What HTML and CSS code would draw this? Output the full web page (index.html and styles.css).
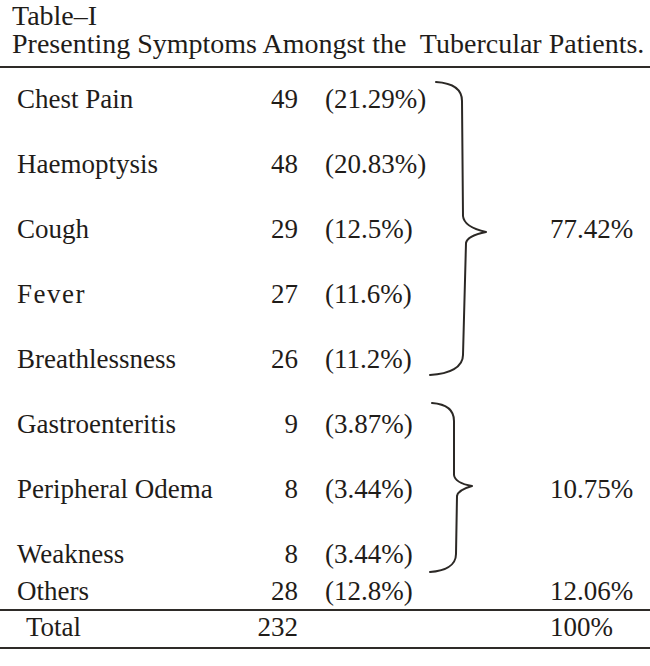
FILE: index.html
```html
<!DOCTYPE html>
<html lang="en">
<head>
<meta charset="utf-8">
<title>Table–I</title>
<link rel="stylesheet" href="styles.css">
</head>
<body>
<div class="page">
  <div class="caption">
    <div>Table–I</div>
    <div>Presenting Symptoms Amongst the&nbsp; Tubercular Patients.</div>
  </div>
  <div class="rule"></div>
  <div class="tbody">
    <div class="group g5">
      <div class="name r1">Chest Pain</div><div class="count r1">49</div><div class="pct r1">(21.29%)</div>
      <div class="name r2">Haemoptysis</div><div class="count r2">48</div><div class="pct r2">(20.83%)</div>
      <div class="name r3">Cough</div><div class="count r3">29</div><div class="pct r3">(12.5%)</div>
      <div class="name r4 spaced">Fever</div><div class="count r4">27</div><div class="pct r4">(11.6%)</div>
      <div class="name r5">Breathlessness</div><div class="count r5">26</div><div class="pct r5">(11.2%)</div>
      <div class="brace">
        <svg class="brace-svg" width="60" height="292" viewBox="0 0 60 292">
          <path d="M 6 -1 C 22 0, 32 5, 32 18 L 33 133 Q 34 144 56 149 Q 37 153 36 160 L 33 272 C 33 284, 20 291, 0 292"/>
        </svg>
      </div>
      <div class="value">77.42%</div>
    </div>
    <div class="group g3">
      <div class="name r1">Gastroenteritis</div><div class="count r1">9</div><div class="pct r1">(3.87%)</div>
      <div class="name r2">Peripheral Odema</div><div class="count r2">8</div><div class="pct r2">(3.44%)</div>
      <div class="name r3">Weakness</div><div class="count r3">8</div><div class="pct r3">(3.44%)</div>
      <div class="brace">
        <svg class="brace-svg" width="60" height="162" viewBox="0 0 60 162">
          <path d="M 2 -5 C 16 -4, 24 1, 24 13 L 24 67 Q 25 75 42 78 Q 28 82 27 88 L 26 146 C 26 158, 14 163, 0 164"/>
        </svg>
      </div>
      <div class="value">10.75%</div>
    </div>
    <div class="group g1 others">
      <div class="name">Others</div><div class="count">28</div><div class="pct">(12.8%)</div><div></div><div class="value">12.06%</div>
    </div>
  </div>
  <div class="rule rule-mid"></div>
  <div class="group g1 total">
    <div class="name">Total</div><div class="count">232</div><div class="pct"></div><div></div><div class="value">100%</div>
  </div>
  <div class="rule rule-end"></div>
</div>
</body>
</html>
```
FILE: styles.css
```css
html, body {
  margin: 0;
  padding: 0;
  background: #ffffff;
}
body {
  width: 650px;
  height: 666px;
  overflow: hidden;
  color: #1f1c19;
  font-family: "Liberation Serif", "Times New Roman", serif;
}
.page {
  padding-top: 2px;
}
.caption {
  padding-left: 12px;
  font-size: 28px;
  line-height: 28px;
  white-space: nowrap;
  margin-bottom: 8px;
}
.rule {
  height: 2px;
  background: #2e2b28;
}
.tbody {
  padding-top: 15px;
}
.group {
  display: grid;
  grid-template-columns: 233px 48px 132px 120px 1fr;
  row-gap: 33px;
  padding-left: 17px;
  font-size: 27px;
  line-height: 32px;
  white-space: nowrap;
}
.g5 { grid-template-rows: repeat(5, 32px); }
.g3 { grid-template-rows: repeat(3, 32px); }
.g1 { grid-template-rows: 32px; }
.group + .group {
  margin-top: 33px;
}
.group.others {
  margin-top: 5px;
}
.name { grid-column: 1; }
.count { grid-column: 2; text-align: right; }
.pct { grid-column: 3; padding-left: 27px; }
.r1 { grid-row: 1; }
.r2 { grid-row: 2; }
.r3 { grid-row: 3; }
.r4 { grid-row: 4; }
.r5 { grid-row: 5; }
.spaced { letter-spacing: 1.5px; }
.brace {
  grid-column: 4;
  grid-row: 1 / -1;
  align-self: start;
  height: 0;
}
.brace-svg {
  display: block;
  overflow: visible;
}
.brace-svg path {
  fill: none;
  stroke: #2b2825;
  stroke-width: 2;
  stroke-linecap: round;
  stroke-linejoin: round;
}
.value {
  grid-column: 5;
  grid-row: 1 / -1;
  align-self: center;
}
.rule-mid {
  margin-top: 2px;
}
.total .name {
  padding-left: 9px;
}
.rule-end {
  margin-top: 4px;
}
```
